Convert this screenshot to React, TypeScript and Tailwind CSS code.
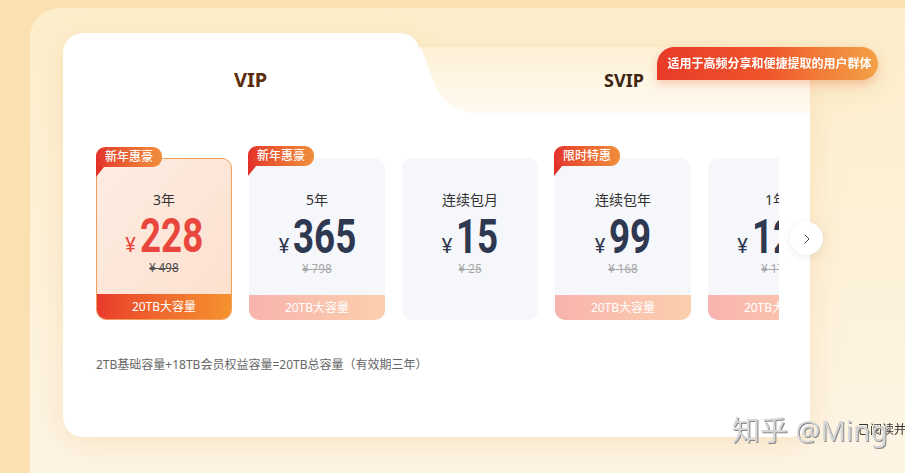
import { ChevronRight } from "lucide-react";

interface Plan {
  title: string;
  price: string;
  origin: string;
  numWidth: string;
  badge?: string;
  bar?: boolean;
  active?: boolean;
}

const plans: Plan[] = [
  { title: "3年", price: "228", origin: "¥ 498", numWidth: "w-[63px]", badge: "新年惠豪", bar: true, active: true },
  { title: "5年", price: "365", origin: "¥ 798", numWidth: "w-[62px]", badge: "新年惠豪", bar: true },
  { title: "连续包月", price: "15", origin: "¥ 25", numWidth: "w-[42px]" },
  { title: "连续包年", price: "99", origin: "¥ 168", numWidth: "w-[42px]", badge: "限时特惠", bar: true },
  { title: "1年", price: "128", origin: "¥ 178", numWidth: "w-[63px]", bar: true },
];

function PlanCard({ plan }: { plan: Plan }) {
  const active = plan.active;
  return (
    <div
      className={
        active
          ? "relative flex h-[162px] w-[136px] shrink-0 flex-col items-center rounded-[10px] border border-[#f2a15c] bg-linear-to-br from-[#fdece4] to-[#fde0cc]"
          : "relative flex h-[162px] w-[136px] shrink-0 flex-col items-center rounded-[10px] bg-[#f6f7fb]"
      }
    >
      {plan.badge && (
        <>
          <div className="absolute top-[8px] -left-px h-[10px] w-[8px] bg-[#e0322a] [clip-path:polygon(0_0,100%_0,0_100%)]" />
          <div className="absolute -top-[12px] -left-px h-[20px] rounded-t-[9px] rounded-br-[9px] bg-linear-to-r from-[#e3302a] to-[#f08e3c] px-[9px] text-[12px] leading-[20px] font-medium whitespace-nowrap text-white">
            {plan.badge}
          </div>
        </>
      )}
      <div className={active ? "mt-[31px] text-[14px] leading-[20px] whitespace-nowrap text-[#333]" : "mt-[32px] text-[14px] leading-[20px] whitespace-nowrap text-[#333]"}>
        {plan.title}
      </div>
      <div
        className={
          active
            ? "mt-[7px] flex items-baseline gap-[4px] text-[#e9463d]"
            : "mt-[8px] flex items-baseline gap-[4px] text-[#2e3850]"
        }
      >
        <span className="text-[20px] leading-none font-['Roboto',sans-serif]">¥</span>
        <span className={`inline-block whitespace-nowrap ${plan.numWidth}`}>
          <span className="inline-block origin-left scale-x-[0.75] text-[49px] leading-[38px] font-bold font-['Roboto',sans-serif]">
            {plan.price}
          </span>
        </span>
      </div>
      <div
        className={
          active
            ? "mt-[3px] text-[12px] leading-[14px] whitespace-nowrap text-[#555] line-through font-['Roboto',sans-serif]"
            : "mt-[3px] text-[12px] leading-[14px] whitespace-nowrap text-[#aaa] line-through font-['Roboto',sans-serif]"
        }
      >
        {plan.origin}
      </div>
      {plan.bar && (
        <div
          className={
            active
              ? "mt-auto h-[25px] w-full rounded-b-[9px] bg-linear-to-r from-[#e9392b] to-[#f5922f] text-center text-[12px] leading-[25px] whitespace-nowrap text-white"
              : "mt-auto h-[25px] w-full rounded-b-[10px] bg-linear-to-r from-[#f8b3ae] to-[#fbd0ad] text-center text-[12px] leading-[25px] whitespace-nowrap text-white"
          }
        >
          20TB大容量
        </div>
      )}
    </div>
  );
}

export default function App() {
  return (
    <div className="relative h-[473px] w-[905px] overflow-hidden bg-[#fbe1b2] pt-[8px] pl-[30px] font-['Noto_Sans','Noto_Sans_CJK_SC',sans-serif]">
      <div className="h-full rounded-tl-[30px] bg-linear-to-b from-[#fdeecb] to-[#fdf4e4] pt-[25px] pl-[33px]">
        <div className="relative flex h-[404px] w-[747px] flex-col drop-shadow-[0_6px_14px_rgba(232,184,120,0.28)]">
          {/* tabs */}
          <div className="flex h-[80px]">
            <div className="flex w-[357px] items-center justify-center rounded-t-[20px] bg-white pt-[14px] pl-[18px] text-[20px] font-bold text-[#5b2c0b]">
              VIP
            </div>
            <div className="relative mt-[14px] flex h-[66px] flex-1 items-center justify-center overflow-hidden bg-white pl-[18px]">
              <div className="absolute inset-y-0 left-[25px] right-[-60px] origin-bottom-left skew-x-[20deg] rounded-bl-[30px] bg-linear-to-b from-[#fdf0d5] to-[#fffaf1]" />
              <span className="relative text-[18px] font-bold text-[#3d2513]">SVIP</span>
            </div>
          </div>

          {/* body */}
          <div className="relative flex-1 rounded-b-[20px] bg-white pt-[33px]">
            <div className="ml-[33px] flex w-[683px] gap-[17px] overflow-hidden pt-[12px]">
              {plans.map((p) => (
                <PlanCard key={p.title} plan={p} />
              ))}
            </div>
            <p className="mt-[37px] ml-[33px] text-[12px] leading-[16px] text-[#666]">
              2TB基础容量+18TB会员权益容量=20TB总容量（有效期三年）
            </p>
            <button className="absolute top-[109px] left-[727px] flex h-[33px] w-[33px] items-center justify-center rounded-full bg-white shadow-[0_2px_8px_rgba(0,0,0,0.08)]">
              <ChevronRight className="h-[16px] w-[16px] text-[#444]" strokeWidth={1.5} />
            </button>
          </div>

          <div className="absolute top-[14px] left-[594px] flex h-[33px] w-[221px] items-center justify-center rounded-tl-[18px] rounded-r-[17px] bg-linear-to-r from-[#e83a28] via-[#ef552c] to-[#f3a146] pl-[4px] text-[12px] font-bold whitespace-nowrap text-white shadow-[0_4px_10px_rgba(232,80,40,0.25)]">
            适用于高频分享和便捷提取的用户群体
          </div>
        </div>
      </div>

      {/* watermark */}
      <div className="absolute top-[423px] left-[858px] text-[12px] leading-[14px] whitespace-nowrap text-[#333]">已阅读并</div>
      <div className="absolute top-[412px] left-[732px] text-[28px] leading-[36px] whitespace-nowrap text-[#d6d6d6] [text-shadow:1px_1px_0_#8a8a8a]">
        知乎 @Ming
      </div>
    </div>
  );
}
